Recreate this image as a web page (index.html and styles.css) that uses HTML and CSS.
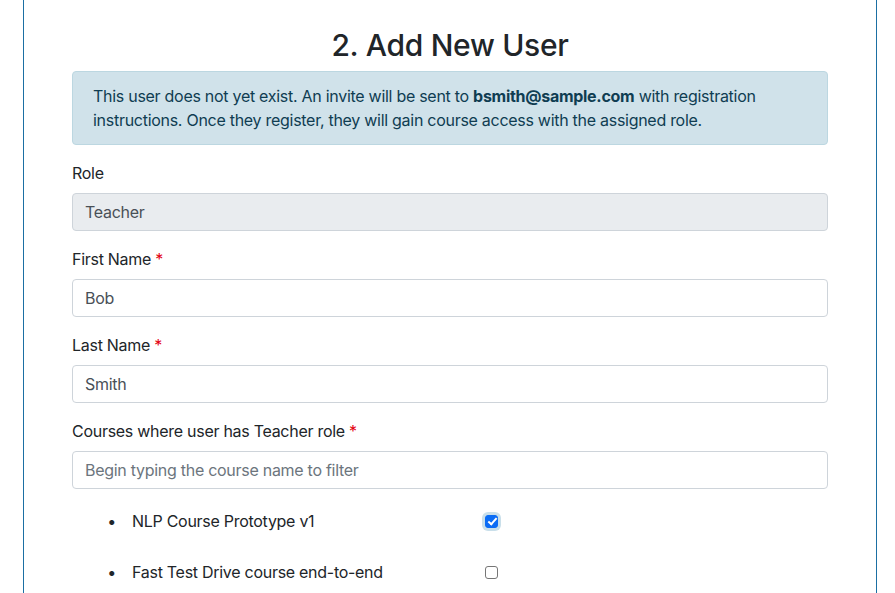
FILE: index.html
```html
<!DOCTYPE html>
<html lang="en">
<head>
    <meta charset="UTF-8">
    <title>Add New User</title>
    <link rel="stylesheet" href="styles.css">
</head>
<body>
    <div class="panel">
        <h2>2. Add New User</h2>
        <div class="alert">
            <p>This user does not yet exist. An invite will be sent to <strong>bsmith@sample.com</strong> with registration</p>
            <p>instructions. Once they register, they will gain course access with the assigned role.</p>
        </div>
        <div class="form-group">
            <label class="form-label">Role</label>
            <input class="form-control" type="text" value="Teacher" readonly>
        </div>
        <div class="form-group">
            <label class="form-label">First Name <span class="req">*</span></label>
            <input class="form-control" type="text" value="Bob">
        </div>
        <div class="form-group">
            <label class="form-label">Last Name <span class="req">*</span></label>
            <input class="form-control" type="text" value="Smith">
        </div>
        <div class="form-group courses">
            <label class="form-label">Courses where user has Teacher role <span class="req">*</span></label>
            <input class="form-control" type="text" placeholder="Begin typing the course name to filter">
        </div>
        <ul class="course-list">
            <li>
                <div class="course-row">
                    <span class="course-name">NLP Course Prototype v1</span>
                    <span class="check checked focused"></span>
                </div>
            </li>
            <li>
                <div class="course-row">
                    <span class="course-name">Fast Test Drive course end-to-end</span>
                    <span class="check"></span>
                </div>
            </li>
        </ul>
    </div>
</body>
</html>
```

FILE: styles.css
```css
* {
    margin: 0;
    padding: 0;
    box-sizing: border-box;
}

body {
    font-family: Inter, 'Liberation Sans', sans-serif;
    font-size: 16px;
    line-height: 1.5;
    letter-spacing: -0.28px;
    color: #212529;
    background: #fff;
}

.panel {
    width: 854px;
    min-height: 593px;
    margin-left: 23px;
    padding: 26px 48px 0;
    border-left: 1px solid #1b6fa3;
    border-right: 1px solid #1b6fa3;
}

h2 {
    font-size: 30px;
    font-weight: 500;
    line-height: 38px;
    text-align: center;
    margin-bottom: 7px;
    letter-spacing: -0.3px;
}

.alert {
    background: #d0e2ea;
    border: 1px solid #bcd7e1;
    border-radius: 4px;
    color: #0f3d52;
    padding: 12px 20px;
    margin-bottom: 16px;
    white-space: nowrap;
}

.alert strong {
    font-weight: 700;
}

.form-group {
    margin-bottom: 16px;
}

.form-label {
    display: block;
    margin-bottom: 8px;
}

.req {
    color: #e3000f;
}

.form-control {
    display: block;
    width: 100%;
    height: 38px;
    padding: 6px 12px;
    font: inherit;
    letter-spacing: inherit;
    color: #495057;
    background: #fff;
    border: 1px solid #ced4da;
    border-radius: 4px;
    outline: none;
}

.form-control[readonly] {
    background: #e9ecef;
}

.form-control::placeholder {
    color: #6c757d;
}

.courses {
    margin-bottom: 7px;
}

.course-list {
    padding-left: 60px;
}

.course-list li {
    height: 51px;
    padding-top: 13px;
}

.course-list li::marker {
    content: "\2022\00a0\00a0\00a0\00a0";
}

.course-row {
    display: flex;
    align-items: center;
    height: 24px;
}

.course-name {
    width: 353px;
}

.check {
    width: 13px;
    height: 13px;
    border: 1px solid #767676;
    border-radius: 3px;
    background: #fff;
    position: relative;
}

.check.checked {
    background: #0b6cf5;
    border-color: #0b6cf5;
}

.check.focused {
    box-shadow: 0 0 0 3px #c9dfea;
}

.check.checked::after {
    content: "";
    position: absolute;
    left: 3.5px;
    top: 0.5px;
    width: 3px;
    height: 7px;
    border: solid #fff;
    border-width: 0 2px 2px 0;
    transform: rotate(42deg);
}
```
